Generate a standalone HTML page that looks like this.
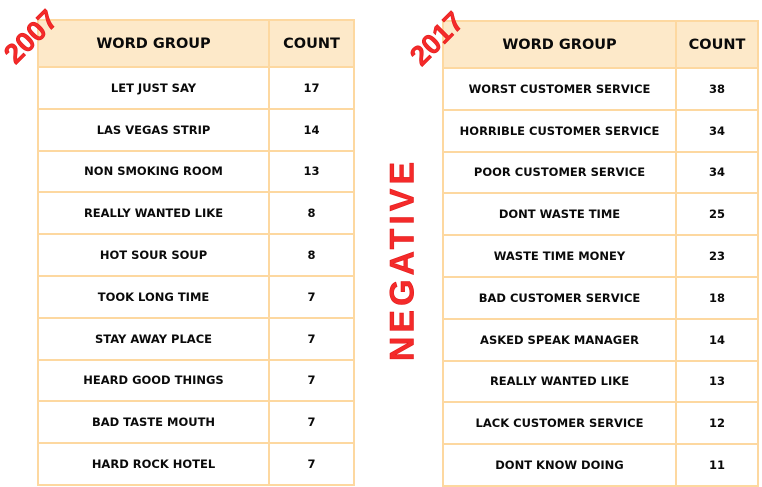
<!DOCTYPE html>
<html><head><meta charset="utf-8"><style>
body{margin:0;width:762px;height:487px;background:#fff;position:relative;overflow:hidden;font-family:"DejaVu Sans","Liberation Sans",sans-serif}
.t{position:absolute;border-collapse:collapse}
.t td{border:2px solid #fdd8a0;text-align:center;font-weight:bold;font-size:11.5px;color:#0a0a0a;letter-spacing:0;padding:0}
.t tr.h td{background:#fde9c9;font-size:14.5px}
.yr{position:absolute;color:#f42a2a;font-weight:bold;font-size:28px;transform:rotate(-45deg);letter-spacing:0;font-family:"Liberation Sans",sans-serif;-webkit-text-stroke:0.5px #e01010}
.neg{position:absolute;color:#f42a2a;font-weight:bold;font-size:34px;letter-spacing:4px;transform:rotate(-90deg);left:298px;top:240px;width:210px;text-align:center;font-family:"Liberation Sans",sans-serif;-webkit-text-stroke:0.5px #e01010}
</style></head><body>
<table class="t" style="left:37px;top:19px;width:318px;height:467px">
<tr class="h" style="height:47px"><td style="width:229px">WORD GROUP</td><td>COUNT</td></tr>
<tr><td>LET JUST SAY</td><td>17</td></tr>
<tr><td>LAS VEGAS STRIP</td><td>14</td></tr>
<tr><td>NON SMOKING ROOM</td><td>13</td></tr>
<tr><td>REALLY WANTED LIKE</td><td>8</td></tr>
<tr><td>HOT SOUR SOUP</td><td>8</td></tr>
<tr><td>TOOK LONG TIME</td><td>7</td></tr>
<tr><td>STAY AWAY PLACE</td><td>7</td></tr>
<tr><td>HEARD GOOD THINGS</td><td>7</td></tr>
<tr><td>BAD TASTE MOUTH</td><td>7</td></tr>
<tr><td>HARD ROCK HOTEL</td><td>7</td></tr>
</table>
<table class="t" style="left:442px;top:20px;width:317px;height:467px">
<tr class="h" style="height:47px"><td style="width:231px">WORD GROUP</td><td>COUNT</td></tr>
<tr><td>WORST CUSTOMER SERVICE</td><td>38</td></tr>
<tr><td>HORRIBLE CUSTOMER SERVICE</td><td>34</td></tr>
<tr><td>POOR CUSTOMER SERVICE</td><td>34</td></tr>
<tr><td>DONT WASTE TIME</td><td>25</td></tr>
<tr><td>WASTE TIME MONEY</td><td>23</td></tr>
<tr><td>BAD CUSTOMER SERVICE</td><td>18</td></tr>
<tr><td>ASKED SPEAK MANAGER</td><td>14</td></tr>
<tr><td>REALLY WANTED LIKE</td><td>13</td></tr>
<tr><td>LACK CUSTOMER SERVICE</td><td>12</td></tr>
<tr><td>DONT KNOW DOING</td><td>11</td></tr>
</table>
<div class="yr" style="left:0px;top:21px">2007</div>
<div class="yr" style="left:406px;top:23px">2017</div>
<div class="neg">NEGATIVE</div>
</body></html>
